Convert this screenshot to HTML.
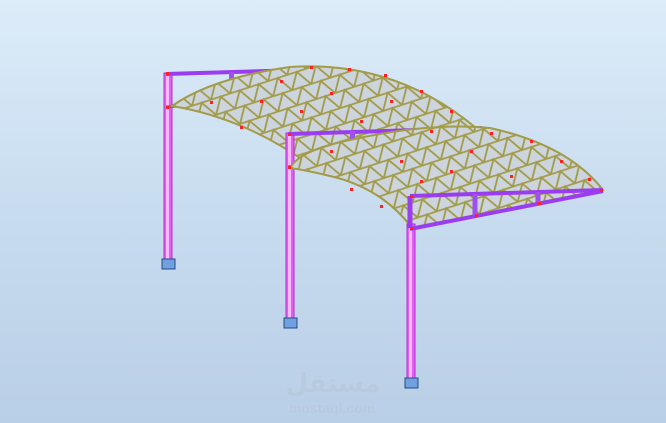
<!DOCTYPE html>
<html><head><meta charset="utf-8"><style>
html,body{margin:0;padding:0;width:666px;height:423px;overflow:hidden}
body{background:linear-gradient(#dcecf9,#c8dcef 50%,#b9cfe7)}
svg{position:absolute;left:0;top:0}
</style></head><body>
<svg width="666" height="423" viewBox="0 0 666 423" xmlns="http://www.w3.org/2000/svg">
<defs>
<pattern id="lat" width="20" height="16" patternUnits="userSpaceOnUse" patternTransform="rotate(-18)">
<rect width="20" height="16" fill="#ccd5de"/>
<path d="M0 0H20M0 16H20M0 0L10 16L20 0M0 16L-10 0M20 16L30 0" stroke="#a29b48" stroke-width="1.8" fill="none"/>
</pattern>
</defs>
<!-- column 1 & beams -->
<rect x="164" y="73" width="8" height="190" fill="#e060f0" stroke="#b030d0" stroke-width="1"/>
<rect x="166" y="73" width="3" height="190" fill="#f6b8ff"/>
<path d="M166 74 L300 70" stroke="#9a3cf0" stroke-width="4"/>
<path d="M166 107 L178 106" stroke="#9a3cf0" stroke-width="3"/>
<rect x="229" y="72" width="5" height="8" fill="#a050f0"/>
<!-- canopy 1 -->
<path d="M172 106 Q212 78 290 67 Q395 60 476 128 L420 140 L310 165 Q245 118 172 106Z" fill="url(#lat)" stroke="#a29b48" stroke-width="2"/>
<!-- column 2 -->
<rect x="286" y="133" width="8" height="188" fill="#e060f0" stroke="#b030d0" stroke-width="1"/>
<rect x="288" y="133" width="3" height="188" fill="#f6b8ff"/>
<path d="M288 134 L482 128" stroke="#9a3cf0" stroke-width="4"/>
<path d="M288 167 L300 165" stroke="#9a3cf0" stroke-width="3"/>
<rect x="350" y="131" width="5" height="8" fill="#a050f0"/>
<!-- canopy 2 -->
<path d="M290 168 Q300 150 350 140 Q430 122 490 128 Q568 145 603 190 L412 228 Q382 188 330 176 Q305 170 290 168Z" fill="url(#lat)" stroke="#a29b48" stroke-width="2"/>
<!-- column 3 frame -->
<rect x="407" y="224" width="8" height="159" fill="#e060f0" stroke="#b030d0" stroke-width="1"/>
<rect x="409" y="224" width="3" height="159" fill="#f6b8ff"/>
<path d="M410 196 L603 190" stroke="#9a3cf0" stroke-width="4"/>
<path d="M410 196 L410 228" stroke="#9a3cf0" stroke-width="5"/>
<path d="M410 229 L603 191" stroke="#9a3cf0" stroke-width="4"/>
<path d="M475 194 L475 215 M538 192 L538 202" stroke="#a050f0" stroke-width="5"/>
<!-- red nodes -->
<g fill="#ff2020">
<rect x="166" y="72" width="3" height="3"/><rect x="166" y="106" width="3" height="3"/><rect x="288" y="133" width="3" height="3"/><rect x="288" y="166" width="3" height="3"/><rect x="410" y="195" width="3" height="3"/><rect x="410" y="227" width="3" height="3"/>
<rect x="310" y="66" width="3" height="3"/><rect x="348" y="68" width="3" height="3"/><rect x="384" y="74" width="3" height="3"/><rect x="420" y="90" width="3" height="3"/><rect x="450" y="110" width="3" height="3"/><rect x="240" y="126" width="3" height="3"/><rect x="260" y="100" width="3" height="3"/><rect x="330" y="92" width="3" height="3"/><rect x="360" y="120" width="3" height="3"/><rect x="210" y="101" width="3" height="3"/><rect x="280" y="80" width="3" height="3"/><rect x="300" y="110" width="3" height="3"/><rect x="390" y="100" width="3" height="3"/>
<rect x="430" y="130" width="3" height="3"/><rect x="490" y="132" width="3" height="3"/><rect x="530" y="140" width="3" height="3"/><rect x="560" y="160" width="3" height="3"/><rect x="588" y="178" width="3" height="3"/><rect x="350" y="188" width="3" height="3"/><rect x="380" y="205" width="3" height="3"/><rect x="450" y="170" width="3" height="3"/><rect x="510" y="175" width="3" height="3"/><rect x="400" y="160" width="3" height="3"/><rect x="475" y="214" width="3" height="3"/><rect x="538" y="202" width="3" height="3"/><rect x="600" y="189" width="3" height="3"/><rect x="330" y="150" width="3" height="3"/><rect x="470" y="150" width="3" height="3"/><rect x="420" y="180" width="3" height="3"/>
</g>
<!-- bases -->
<g stroke="#2a4a80" stroke-width="1">
<rect x="162" y="259" width="13" height="10" fill="#6fa0e0"/>
<rect x="284" y="318" width="13" height="10" fill="#6fa0e0"/>
<rect x="405" y="378" width="13" height="10" fill="#6fa0e0"/>
</g>
<text x="333" y="392" text-anchor="middle" font-family="'Liberation Sans','DejaVu Sans',sans-serif" font-size="26" font-weight="bold" fill="#b8c6d8" opacity="0.6">مستقل</text>
<text x="332" y="413" text-anchor="middle" font-family="'Liberation Sans',sans-serif" font-size="14" font-weight="bold" fill="#b8c6d8" opacity="0.6">mostaql.com</text>
</svg>
</body></html>
